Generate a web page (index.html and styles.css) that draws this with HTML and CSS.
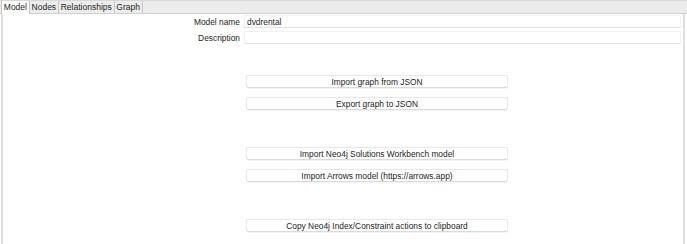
FILE: index.html
```html
<!DOCTYPE html>
<html lang="en">
<head>
    <meta charset="UTF-8">
    <meta name="viewport" content="width=device-width, initial-scale=1.0">
    <title>Model</title>
    <link rel="stylesheet" href="styles.css">
</head>
<body>
    <div class="window">
        <div class="tabbar">
            <div class="tab selected">Model</div>
            <div class="tab">Nodes</div>
            <div class="tab">Relationships</div>
            <div class="tab">Graph</div>
        </div>

        <div class="panel">
            <div class="form">
                <label for="modelName">Model name</label>
                <input type="text" id="modelName" value="dvdrental">
                <label for="description">Description</label>
                <input type="text" id="description" value="">
            </div>

            <div class="actions">
                <div class="group">
                    <button>Import graph from JSON</button>
                    <button>Export graph to JSON</button>
                </div>
                <div class="group">
                    <button>Import Neo4j Solutions Workbench model</button>
                    <button>Import Arrows model (https://arrows.app)</button>
                </div>
                <div class="group">
                    <button>Copy Neo4j Index/Constraint actions to clipboard</button>
                </div>
            </div>
        </div>
    </div>
</body>
</html>
```

FILE: styles.css
```css
:root {
    --bar-bg: #ececec;
    --line-color: #d0d0d0;
    --edge-color: #dedede;
    --text-color: #1e1e1e;
}

body {
    font-family: 'Liberation Sans', Arial, sans-serif;
    font-size: 8.4px;
    color: var(--text-color);
    margin: 0;
    padding: 0;
    background-color: #fff;
}
.window {
    width: 687px;
    height: 244px;
    display: flex;
    flex-direction: column;
}
.tabbar {
    display: flex;
    height: 12px;
    background-color: var(--bar-bg);
    border-top: 1px solid #d8d8d8;
    border-bottom: 1px solid var(--line-color);
    padding-left: 2px;
}
.tab {
    font-size: 8.5px;
    line-height: 12px;
    padding: 0 1.8px;
    border-right: 1px solid #c6c6c6;
}
.tab.selected {
    background-color: #fff;
    border-left: 1px solid #c6c6c6;
    height: 13px;
    margin-left: -1px;
}
.panel {
    flex: 1;
    margin: 0 2px 0 1px;
    border-left: 2px solid var(--edge-color);
    border-right: 2px solid var(--edge-color);
    padding: 1px 2px 0 0;
}
.form {
    display: grid;
    grid-template-columns: 237px 1fr;
    column-gap: 4px;
    row-gap: 3px;
    align-items: center;
}
.form label {
    text-align: right;
}
.form input {
    height: 13px;
    box-sizing: border-box;
    border: 1px solid #efefef;
    border-bottom-color: #e2e2e2;
    border-radius: 1px;
    padding: 0 2px;
    font-family: inherit;
    font-size: 8.4px;
    color: var(--text-color);
    background-color: #fff;
    outline: none;
}
.actions {
    margin: 31px 0 0 243px;
    width: 262px;
    display: flex;
    flex-direction: column;
    gap: 37px;
}
.group {
    display: flex;
    flex-direction: column;
    gap: 9px;
}
button {
    height: 13px;
    padding: 0;
    border: 1px solid #e8e8e8;
    border-bottom-color: #dadada;
    border-radius: 3px;
    background-color: #fff;
    box-shadow: 0 0.5px 1px rgba(0, 0, 0, 0.05);
    font-family: inherit;
    font-size: 8.4px;
    color: var(--text-color);
    line-height: 12px;
}
```
